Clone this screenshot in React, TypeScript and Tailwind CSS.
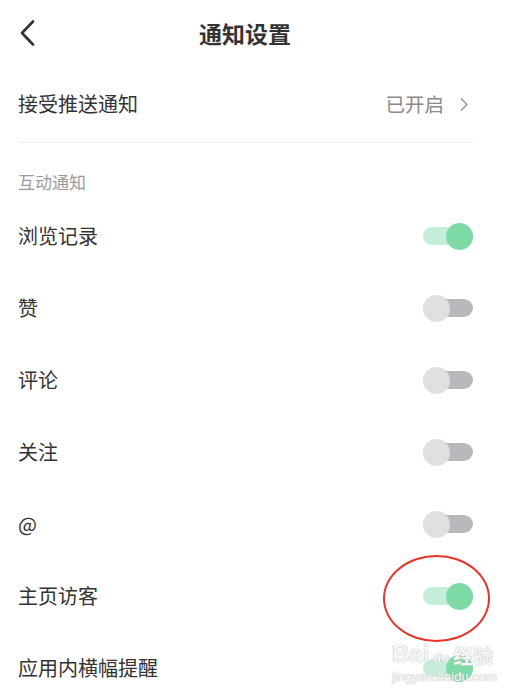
const rows = [
  { label: "浏览记录", on: true },
  { label: "赞", on: false },
  { label: "评论", on: false },
  { label: "关注", on: false },
  { label: "@", on: false },
  { label: "主页访客", on: true },
  { label: "应用内横幅提醒", on: true },
];

function Toggle({ on }: { on: boolean }) {
  return (
    <div className="relative w-[50px] h-[27px] flex items-center">
      <div className={"w-full h-[18px] rounded-full " + (on ? "bg-[#c4eed7]" : "bg-[#b9b9bd]")} />
      <div
        className={
          "absolute top-0 w-[27px] h-[27px] rounded-full " +
          (on ? "right-0 bg-[#7edba8]" : "left-0 bg-[#e0e0e3]")
        }
      />
    </div>
  );
}

export default function App() {
  return (
    <div
      className="relative w-[515px] h-[692px] overflow-hidden bg-white text-[#333]"
      style={{ fontFamily: '"Noto Sans CJK SC", "Noto Sans", sans-serif' }}
    >
      {/* header */}
      <div className="flex items-center h-[66px] pl-[20px]">
        <svg width="15" height="26" viewBox="0 0 15 26" fill="none">
          <path d="M13 1.5 L2 13 L13 24.5" stroke="#333" strokeWidth="2.6" strokeLinecap="round" strokeLinejoin="round" />
        </svg>
        <div className="ml-[164px] text-[23px] font-bold leading-none">通知设置</div>
      </div>

      {/* push */}
      <div className="mx-[18px] mr-[42px] flex items-center justify-between h-[77px] border-b border-[#f0f0f0]">
        <span className="text-[20px]">接受推送通知</span>
        <div className="flex items-center gap-[16px] text-[#8a8a8a]">
          <span className="text-[19.5px]">已开启</span>
          <svg width="9" height="13" viewBox="0 0 9 13" fill="none" className="mr-[4px]">
            <path d="M1.5 1 L7 6.5 L1.5 12" stroke="#999" strokeWidth="1.6" strokeLinecap="round" strokeLinejoin="round" />
          </svg>
        </div>
      </div>

      {/* section label */}
      <div className="h-[57px] pl-[18px] pt-[27px] text-[17px] leading-[24px] text-[#9a9a9a]">互动通知</div>

      {rows.map((r) => (
        <div key={r.label} className="flex items-center justify-between h-[72px] pl-[18px] pr-[42px]">
          <span className="text-[20px]">{r.label}</span>
          <Toggle on={r.on} />
        </div>
      ))}

      {/* red annotation */}
      <div className="absolute left-[383px] top-[555px] w-[107px] h-[87px] rounded-[50%] border-2 border-[#e3362c]" />

      {/* watermark */}
      <div
        className="absolute left-[392px] top-[642px] flex flex-col items-start leading-none text-white/85 pointer-events-none"
        style={{ textShadow: "0 0 1px #bbb, 0 0 1px #bbb" }}
      >
        <div className="flex items-end gap-[4px]" style={{ fontFamily: '"Liberation Sans", "Noto Sans CJK SC", sans-serif' }}>
          <span className="text-[24px] font-bold">Bai</span>
          <span className="text-[13px] font-bold mb-[2px]">du</span>
          <span className="text-[20px] font-bold" style={{ fontFamily: '"Noto Sans CJK SC", sans-serif' }}>经验</span>
        </div>
        <span className="text-[13px] mt-[4px]" style={{ fontFamily: '"Liberation Sans", sans-serif' }}>jingyan.baidu.com</span>
      </div>
    </div>
  );
}
